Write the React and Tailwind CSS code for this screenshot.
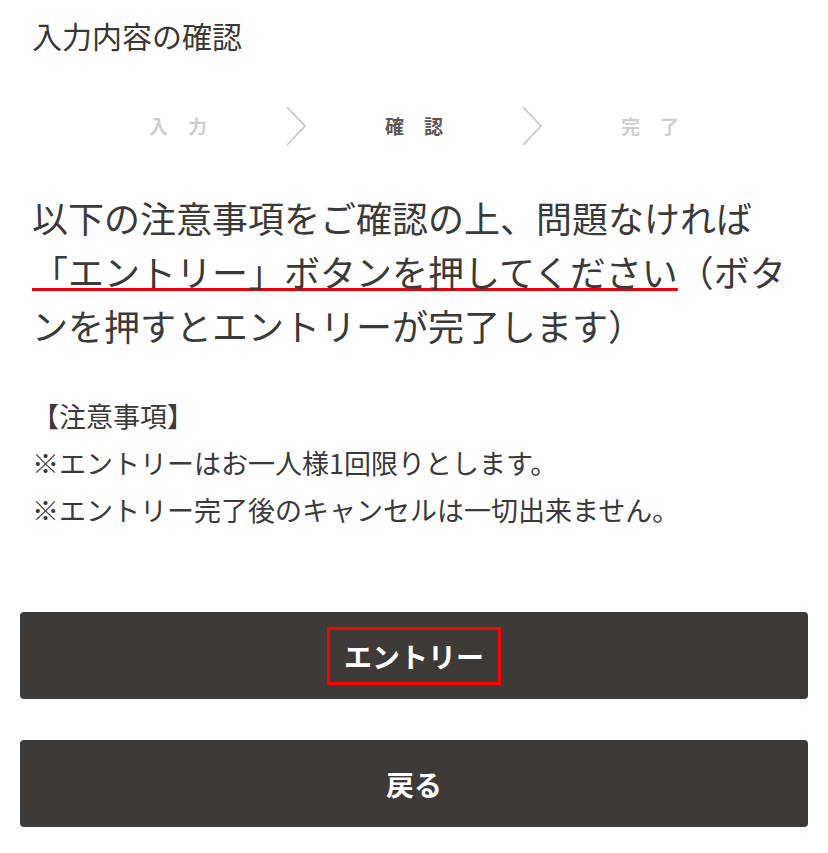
import React from "react";

const font = { fontFamily: '"Noto Sans CJK JP", "Noto Sans", sans-serif' };

const Chevron = () => (
  <svg width="22" height="40" viewBox="0 0 22 40" className="block">
    <polyline
      points="2,1 20,20 2,39"
      fill="none"
      stroke="#c4c4c4"
      strokeWidth="1.6"
    />
  </svg>
);

const Step = ({ chars, active }) => (
  <div
    className={`w-[118px] flex justify-center gap-[20px] text-[19px] font-bold leading-[40px] ${
      active ? "text-[#5b5552]" : "text-[#cfcfcf]"
    }`}
  >
    {chars.map((c) => (
      <span key={c}>{c}</span>
    ))}
  </div>
);

const App = () => {
  return (
    <div className="w-[828px] min-h-[853px] bg-white text-[#3a3a3a]" style={font}>
      {/* Title */}
      <div className="px-[32px] pt-[14px] text-[30px] leading-[42px] text-[#383838]">
        入力内容の確認
      </div>

      {/* Steps */}
      <div className="mt-[50px] flex justify-center items-center">
        <Step chars={["入", "力"]} />
        <div className="w-[118px] flex justify-center">
          <Chevron />
        </div>
        <Step chars={["確", "認"]} active />
        <div className="w-[118px] flex justify-center">
          <Chevron />
        </div>
        <Step chars={["完", "了"]} />
      </div>

      {/* Message */}
      <p className="mt-[44px] px-[32px] text-[36px] leading-[54px]">
        以下の注意事項をご確認の上、問題なければ
        <span className="underline decoration-[#e8000b] decoration-[3px] underline-offset-[1px]">
          「エントリー」ボタンを押してください
        </span>
        （ボタンを押すとエントリーが完了します）
      </p>

      {/* Notes */}
      <div className="mt-[40px] px-[32px] text-[27px] leading-[47px]">
        <p>【注意事項】</p>
        <p>※エントリーはお一人様1回限りとします。</p>
        <p>※エントリー完了後のキャンセルは一切出来ません。</p>
      </div>

      {/* Buttons */}
      <div className="mt-[79px] px-[20px] flex flex-col gap-[41px]">
        <button className="h-[87px] w-full rounded-[4px] bg-[#3e3a37] flex items-center justify-center">
          <span className="h-[58px] px-[14px] border-[3px] border-[#ff0000] flex items-center text-white text-[28px] font-bold">
            エントリー
          </span>
        </button>
        <button className="h-[87px] w-full rounded-[4px] bg-[#3e3a37] flex items-center justify-center text-white text-[28px] font-bold">
          戻る
        </button>
      </div>
    </div>
  );
};

export default App;
